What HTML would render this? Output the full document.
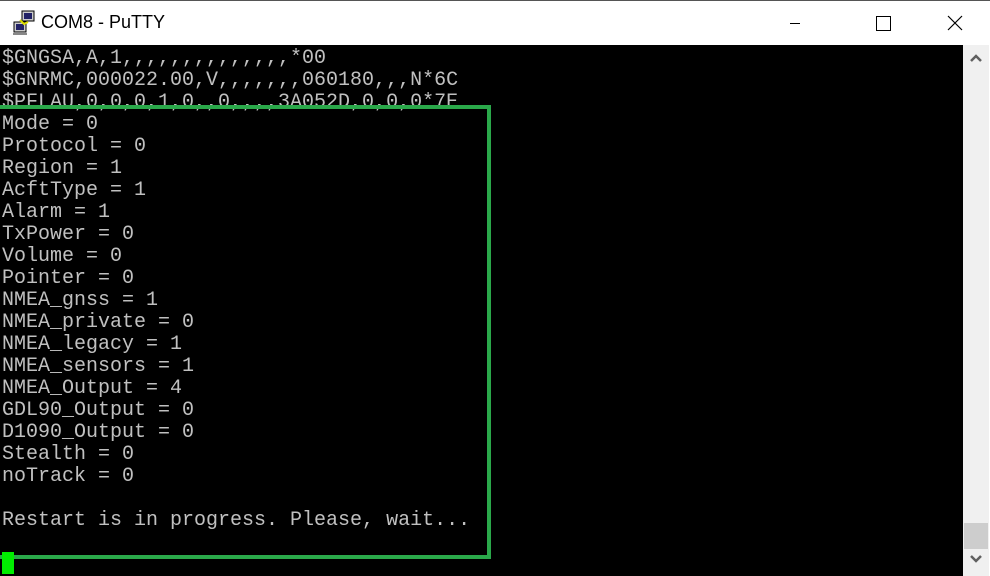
<!DOCTYPE html>
<html><head><style>
body{margin:0;width:990px;height:576px;overflow:hidden;background:#fff;position:relative;font-family:"Liberation Sans",sans-serif}
#title{position:absolute;left:0;top:0;width:990px;height:45px;background:#fff;border-top:1px solid #555}
#title span{position:absolute;left:41px;top:11px;font-size:18px;color:#000}
#term{position:absolute;left:0;top:45px;width:963px;height:531px;background:#000}
#sb{position:absolute;left:963px;top:45px;width:26px;height:531px;background:#f0f0f0}
#thumb{position:absolute;left:964px;top:523px;width:24px;height:26px;background:#cdcdcd}
pre{position:absolute;left:2px;top:48px;margin:0;font-family:"Liberation Mono",monospace;font-size:20px;line-height:22px;color:#c0c0c0}
#box{position:absolute;left:-4px;top:105px;width:487px;height:446px;border:4px solid #2aa84a}
#cur{position:absolute;left:2px;top:552px;width:12px;height:22px;background:#00ee00}
</style></head><body>
<div id="title">
<svg style="position:absolute;left:12px;top:9px" width="26" height="26" viewBox="0 0 26 26">
<rect x="10" y="1" width="12" height="10" fill="#ccc" stroke="#000"/><rect x="12" y="3" width="8" height="6" fill="#226"/>
<rect x="2" y="12" width="12" height="10" fill="#ccc" stroke="#000"/><rect x="4" y="14" width="8" height="6" fill="#226"/>
<path d="M1 23h14v2H1z" fill="#888"/><path d="M8 10l4 4 4-2" stroke="#dd0" stroke-width="2" fill="none"/></svg>
<span>COM8 - PuTTY</span>
<div style="position:absolute;left:790px;top:22px;width:10px;height:1px;background:#000"></div>
<div style="position:absolute;left:876px;top:15px;width:13px;height:13px;border:1px solid #000"></div>
<svg style="position:absolute;left:947px;top:14px" width="16" height="16"><path d="M1 1L15 15M15 1L1 15" stroke="#000" stroke-width="1.2"/></svg>
</div>
<div id="term"></div>
<div id="sb">
<svg style="position:absolute;left:7px;top:9px" width="12" height="8"><path d="M1 7L6 2L11 7" stroke="#606060" stroke-width="2.5" fill="none"/></svg>
<svg style="position:absolute;left:7px;top:510px" width="12" height="8"><path d="M1 1L6 6L11 1" stroke="#606060" stroke-width="2.5" fill="none"/></svg>
</div>
<div id="thumb"></div>
<pre>$GNGSA,A,1,,,,,,,,,,,,,,*00
$GNRMC,000022.00,V,,,,,,,060180,,,N*6C
$PFLAU,0,0,0,1,0,,0,,,,3A052D,0,0,0*7E
Mode = 0
Protocol = 0
Region = 1
AcftType = 1
Alarm = 1
TxPower = 0
Volume = 0
Pointer = 0
NMEA_gnss = 1
NMEA_private = 0
NMEA_legacy = 1
NMEA_sensors = 1
NMEA_Output = 4
GDL90_Output = 0
D1090_Output = 0
Stealth = 0
noTrack = 0

Restart is in progress. Please, wait...</pre>
<div id="box"></div>
<div id="cur"></div>
</body></html>
